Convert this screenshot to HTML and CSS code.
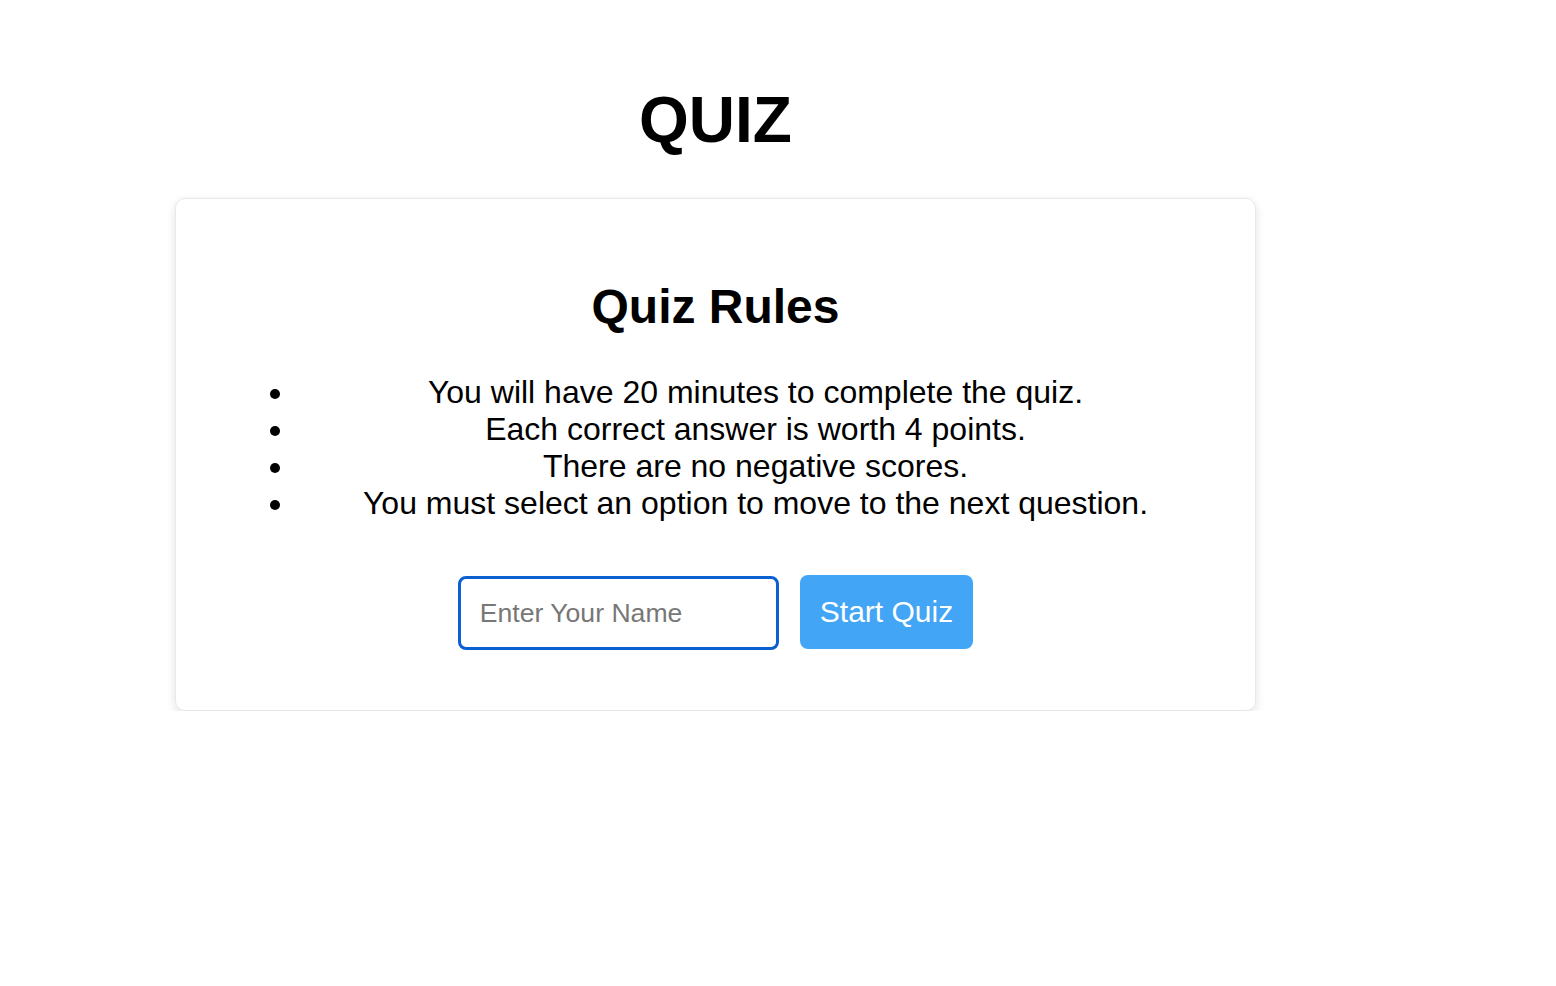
FILE: index.html
```html
<!DOCTYPE html>
<html lang="en">
<head>
<meta charset="utf-8">
<title>Quiz</title>
<link rel="stylesheet" href="styles.css">
</head>
<body>
<div class="page">
  <h1 class="title">QUIZ</h1>
  <div class="card">
    <h2 class="card-title">Quiz Rules</h2>
    <ul class="rules">
      <li>You will have 20 minutes to complete the quiz.</li>
      <li>Each correct answer is worth 4 points.</li>
      <li>There are no negative scores.</li>
      <li>You must select an option to move to the next question.</li>
    </ul>
    <div class="start-row">
      <input class="name-input" type="text" placeholder="Enter Your Name">
      <button class="start-btn" type="button">Start Quiz</button>
    </div>
  </div>
</div>
</body>
</html>
```

FILE: styles.css
```css
html, body {
  margin: 0;
  padding: 0;
  background: #ffffff;
}

body {
  font-family: "Liberation Sans", Arial, Helvetica, sans-serif;
  color: #000000;
}

.page {
  width: 1081px;
  margin-left: 175px;
  padding-top: 40px;
}

.title {
  font-size: 64px;
  font-weight: bold;
  text-align: center;
  margin: 43px 0 41px;
}

.card {
  border: 1px solid #e8e8e8;
  border-radius: 10px;
  box-shadow: 0 3px 10px rgba(0, 0, 0, 0.12);
  padding: 40px;
  text-align: center;
}

.card-title {
  font-size: 48px;
  font-weight: bold;
  margin: 40px 0;
}

.rules {
  font-size: 32px;
  margin: 32px 0;
  padding-left: 80px;
}

.rules li {
  text-align: center;
}

.start-row {
  display: flex;
  justify-content: center;
  align-items: center;
  gap: 21px;
  padding: 20px 0;
}

.name-input {
  box-sizing: border-box;
  width: 321px;
  height: 74px;
  border: 3px solid #0a60d0;
  border-radius: 8px;
  padding: 0 19px;
  font-family: "Liberation Sans", Arial, sans-serif;
  font-size: 26.6px;
  color: #222222;
  outline: none;
  margin-top: 2px;
}

.name-input::placeholder {
  color: #777777;
}

.start-btn {
  box-sizing: border-box;
  height: 74px;
  padding: 0 20px;
  border: none;
  border-radius: 8px;
  background: #42a5f5;
  color: #ffffff;
  font-family: "Liberation Sans", Arial, sans-serif;
  font-size: 30px;
}
```
